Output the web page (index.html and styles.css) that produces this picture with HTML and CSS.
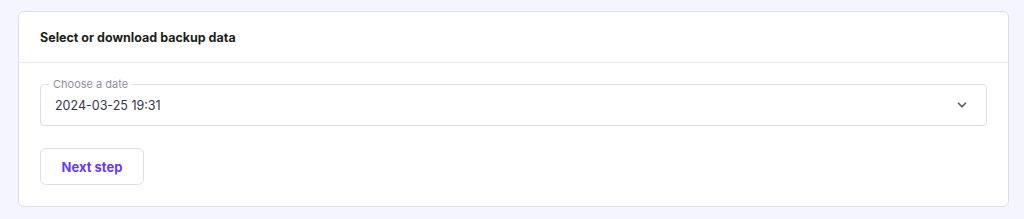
FILE: index.html
```html
<!DOCTYPE html>
<html lang="en">
<head>
    <meta charset="UTF-8">
    <meta name="viewport" content="width=device-width, initial-scale=1.0">
    <title>Backups</title>
    <link rel="stylesheet" href="styles.css">
</head>
<body>
    <div class="card">
        <div class="card-header">Select or download backup data</div>
        <div class="card-body">
            <div class="field">
                <span class="field-label">Choose a date</span>
                <span class="field-value">2024-03-25 19:31</span>
                <svg class="chevron" width="14" height="14" viewBox="0 0 24 24">
                    <path d="M6 9l6 6 6-6" fill="none" stroke="#5a5a73" stroke-width="3" stroke-linecap="round" stroke-linejoin="round"/>
                </svg>
            </div>
            <button class="btn">Next step</button>
        </div>
    </div>
</body>
</html>
```

FILE: styles.css
```css
body {
    font-family: Inter, 'Noto Sans', sans-serif;
    background-color: #f4f5ff;
    margin: 0;
    padding: 11px 15px 12px 18px;
}
.card {
    background-color: white;
    border: 1px solid #dedee4;
    border-radius: 6px;
    box-sizing: border-box;
}
.card-header {
    height: 50px;
    display: flex;
    align-items: center;
    padding: 0 21px;
    font-size: 12.5px;
    font-weight: 700;
    color: #1d1e20;
    border-bottom: 1px solid #e9e9ef;
}
.card-body {
    padding: 21px;
}
.field {
    position: relative;
    height: 42px;
    border: 1px solid #dedee4;
    border-radius: 4px;
    box-sizing: border-box;
    display: flex;
    align-items: center;
    padding: 0 17px 0 14px;
}
.field-label {
    position: absolute;
    top: -8px;
    left: 8px;
    padding: 0 4px;
    background-color: white;
    font-size: 11px;
    color: #8f8fa3;
}
.field-value {
    flex: 1;
    font-size: 12.5px;
    color: #36344d;
}
.chevron {
    display: block;
}
.btn {
    margin-top: 22px;
    width: 104px;
    height: 37px;
    background-color: white;
    border: 1px solid #dedee4;
    border-radius: 6px;
    font-family: inherit;
    font-size: 13px;
    font-weight: 700;
    color: #673de6;
    cursor: pointer;
}
```
